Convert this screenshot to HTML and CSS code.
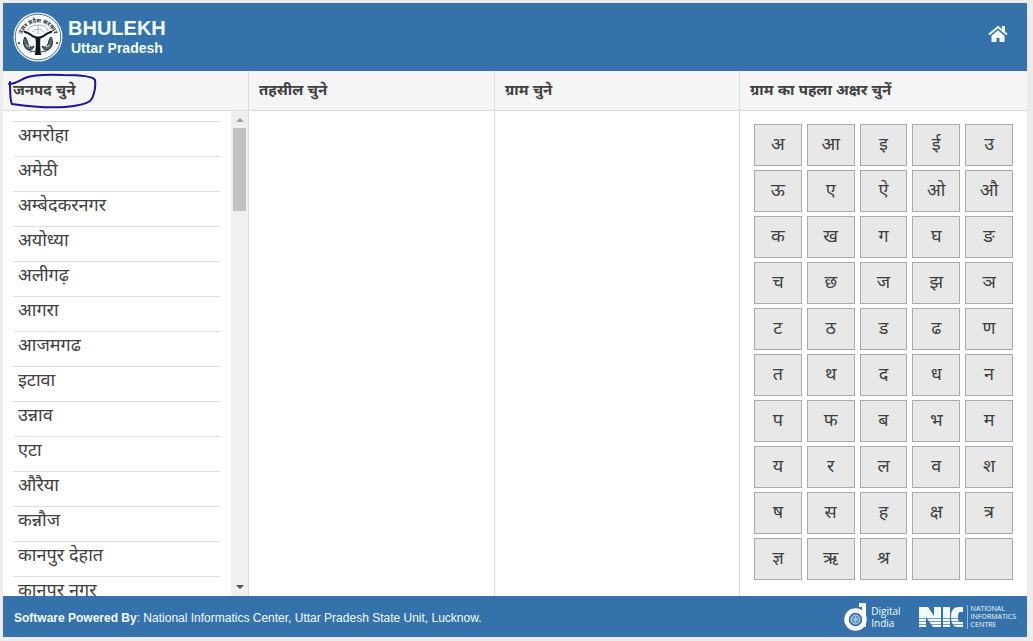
FILE: index.html
```html
<!DOCTYPE html>
<html lang="hi">
<head>
<meta charset="utf-8">
<meta name="viewport" content="width=device-width, initial-scale=1">
<title>BHULEKH Uttar Pradesh</title>
<link rel="stylesheet" href="styles.css">
</head>
<body>
<div class="page">
<header class="header">
  <div class="brand">
    <svg class="emblem" viewBox="0 0 50 50" aria-hidden="true">
      <defs><path id="arc" d="M8.5 27A16.5 16.5 0 0 1 41.5 27"/></defs>
      <circle cx="25" cy="25" r="24.5" fill="#e6f6fb"/>
      <circle cx="25" cy="25" r="22.8" fill="#fbfefe" stroke="#5f7480" stroke-width="1"/>
      <text class="emblem-text"><textPath href="#arc" startOffset="50%" text-anchor="middle">उत्तर प्रदेश सरकार</textPath></text>
      <path d="M15 19q1-6 10-6t10 6M25 13v9M19 20q6-6 12 0" fill="none" stroke="#a3afb3" stroke-width="1"/>
      <path d="M10 18.500c4 .5 6 2 9 4 2 1.500 4 2 6 2s4-.5 6-2c3-2 5-3.500 9-4l-1.500 2.500c-5 1-6 4-11 5.500-.8 5 0 10 .5 16.500h-6c.5-6.500 1.300-11.500.5-16.500-5-1.500-6-4.500-11-5.500z" fill="#10181b"/>
      <path d="M12 25c-3 5-1 11 3 13 3 1 5-1 6-4-2 2-5 1-6-2s-1-5-3-7zM38 25c3 5 1 11-3 13-3 1-5-1-6-4 2 2 5 1 6-2s1-5 3-7z" fill="#56656a" stroke="#1c282c" stroke-width="1"/>
      <path d="M15 27l3 3M35 27l-3 3M13 33l4 2M37 33l-4 2" stroke="#dce5e8" stroke-width="1"/>
      <path d="M17 40q3-2 5 0M28 40q3-2 5 0" fill="none" stroke="#2c393d" stroke-width="1"/>
      <circle cx="6" cy="31" r="1" fill="#222"/><circle cx="44" cy="31" r="1" fill="#222"/>
    </svg>
    <div>
      <h1 class="title">BHULEKH</h1>
      <p class="subtitle">Uttar Pradesh</p>
    </div>
  </div>
  <a class="home" href="#" aria-label="Home">
    <svg viewBox="0 0 20 18" aria-hidden="true"><path d="M1 9.500L10 2l9 7.500" fill="none" stroke="#f4feff" stroke-width="2"/><path d="M14 1h3v7l-3-2zM3.500 10.800L10 5.300l6.500 5.500V17h-5v-4h-3v4h-5z" fill="#f4feff"/></svg>
  </a>
</header>
<main class="columns">
  <section class="column">
    <h2 class="head"><span class="marked">जनपद चुने<svg class="ring" viewBox="0 0 90 36" aria-hidden="true"><path d="M2 9C2 19 2 28 4 31c14 2 38 4 53 3 12-1 21-3 25-6 4-4 6-14 5-21-2-4-18-5-32-5C31 1 22 3 17 5 11 8 7 11 1 11" fill="none" stroke="#1b129f" stroke-width="2" stroke-linecap="round"/></svg></span></h2>
    <div class="scroller">
      <ul class="districts">
        <li><a href="#">अमरोहा</a></li>
        <li><a href="#">अमेठी</a></li>
        <li><a href="#">अम्बेदकरनगर</a></li>
        <li><a href="#">अयोध्या</a></li>
        <li><a href="#">अलीगढ़</a></li>
        <li><a href="#">आगरा</a></li>
        <li><a href="#">आजमगढ</a></li>
        <li><a href="#">इटावा</a></li>
        <li><a href="#">उन्नाव</a></li>
        <li><a href="#">एटा</a></li>
        <li><a href="#">औरैया</a></li>
        <li><a href="#">कन्नौज</a></li>
        <li><a href="#">कानपुर देहात</a></li>
        <li><a href="#">कानपुर नगर</a></li>
      </ul>
      <div class="scrollbar" aria-hidden="true">
        <svg class="arrow" viewBox="0 0 17 17"><path d="M5 11l4-4 4 4z" fill="#a0a0a0"/></svg>
        <div class="thumb"></div>
        <svg class="arrow" viewBox="0 0 17 17"><path d="M5 6l4 4 4-4z" fill="#505050"/></svg>
      </div>
    </div>
  </section>
  <section class="column"><h2 class="head">तहसील चुने</h2></section>
  <section class="column"><h2 class="head">ग्राम चुने</h2></section>
  <section class="column letters">
    <h2 class="head">ग्राम का पहला अक्षर चुनें</h2>
    <div class="keys">
      <button>अ</button><button>आ</button><button>इ</button><button>ई</button><button>उ</button>
      <button>ऊ</button><button>ए</button><button>ऐ</button><button>ओ</button><button>औ</button>
      <button>क</button><button>ख</button><button>ग</button><button>घ</button><button>ङ</button>
      <button>च</button><button>छ</button><button>ज</button><button>झ</button><button>ञ</button>
      <button>ट</button><button>ठ</button><button>ड</button><button>ढ</button><button>ण</button>
      <button>त</button><button>थ</button><button>द</button><button>ध</button><button>न</button>
      <button>प</button><button>फ</button><button>ब</button><button>भ</button><button>म</button>
      <button>य</button><button>र</button><button>ल</button><button>व</button><button>श</button>
      <button>ष</button><button>स</button><button>ह</button><button>क्ष</button><button>त्र</button>
      <button>ज्ञ</button><button>ऋ</button><button>श्र</button><button></button><button></button>
    </div>
  </section>
</main>
<footer class="footer">
  <p class="credit"><b>Software Powered By</b>: National Informatics Center, Uttar Pradesh State Unit, Lucknow.</p>
  <div class="logos">
    <a class="digital" href="#">
      <svg class="d-logo" viewBox="0 0 24 28" aria-hidden="true"><circle cx="11.500" cy="16.500" r="9" fill="none" stroke="#fff" stroke-width="4.500"/><path d="M15 0h7v24h-4V4h-3z" fill="#fff"/><circle cx="11.500" cy="16.500" r="4.500" fill="#5b90c4" stroke="#c6dcf0" stroke-width="1"/><path d="M8 16.500h7M11.500 13v7M9 14l5 5M14 14l-5 5" stroke="#c6dcf0" stroke-width=".6"/></svg>
      <span>Digital<br>India</span>
    </a>
    <a class="nic" href="#">
      <svg class="nic-logo" viewBox="0 0 44 20" role="img" aria-label="NIC"><path d="M0 0h9l6 9V0h7v20h-8L7 10v10H0zM24 0h7v20h-7zM44 0v5h-3q-2 0-2 5t2 5h3v5h-5q-7 0-7-10t7-10z" fill="#f1fbff"/><path d="M0 11.500h44M0 14.500h44M0 17.500h44" stroke="#3572ab" stroke-width=".7"/></svg>
      <span class="nic-text">NATIONAL<br>INFORMATICS<br>CENTRE</span>
    </a>
  </div>
</footer>
</div>
</body>
</html>
```
FILE: styles.css
```css
* { box-sizing: border-box; }
body {
  margin: 0;
  background: #ececec;
  color: #404040;
  font-family: "Liberation Sans", "Noto Sans", "Noto Sans Devanagari", sans-serif;
}
h1, h2, p, ul { margin: 0; padding: 0; }
a { color: inherit; text-decoration: none; }
.page {
  display: flex;
  flex-direction: column;
  height: 100vh;
  padding: 3px 6px 4px 3px;
}
.header {
  display: flex;
  align-items: center;
  justify-content: space-between;
  height: 68px;
  flex: none;
  padding: 0 19px 0 10px;
  background: #3572ab;
  color: #f1fdff;
}
.brand { display: flex; align-items: center; gap: 5px; }
.emblem { width: 50px; height: 50px; }
.emblem-text { font-size: 6px; font-weight: bold; fill: #1c272b; }
.title { font-size: 20px; line-height: 22px; }
.subtitle { padding-left: 3px; font-size: 14px; line-height: 18px; font-weight: bold; }
.home svg { display: block; width: 20px; height: 18px; margin-bottom: 6px; }
.columns {
  display: grid;
  grid-template-columns: 246fr 246fr 245fr 287fr;
  flex: 1;
  min-height: 0;
  background: #fff;
}
.column {
  display: flex;
  flex-direction: column;
  min-width: 0;
  min-height: 0;
  border-right: 1px solid #ddd;
}
.column.letters { border-right: 0; }
.head {
  flex: none;
  height: 40px;
  padding: 0 10px;
  border-bottom: 1px solid #ddd;
  background: #f5f5f5;
  font-size: 15px;
  line-height: 38px;
  white-space: nowrap;
}
.marked { position: relative; display: inline-block; }
.ring { position: absolute; left: -5px; top: 2px; width: 90px; height: 36px; }
.scroller { display: flex; flex: 1; min-height: 0; overflow: hidden; }
.districts { flex: 1; padding: 10px 11px 0; list-style: none; }
.districts li {
  height: 35px;
  padding: 0 4px;
  border-top: 1px solid #ddd;
  font-size: 18px;
  line-height: 26px;
}
.scrollbar { display: flex; flex-direction: column; width: 17px; padding: 0 2px; background: #f0f0f0; }
.arrow { width: 17px; height: 17px; margin-left: -2px; flex: none; }
.thumb { height: 83px; margin-bottom: auto; background: #c1c1c1; }
.keys {
  display: grid;
  grid-template-columns: repeat(5, 1fr);
  grid-auto-rows: 42px;
  gap: 4px 5px;
  padding: 13px 14px;
}
button {
  padding: 0 0 3px;
  border: 1px solid #aaa;
  background: #e8e8e8;
  color: #404040;
  font: 18px/26px "Liberation Sans", "Noto Sans", "Noto Sans Devanagari", sans-serif;
}
.footer {
  display: flex;
  align-items: center;
  justify-content: space-between;
  flex: none;
  height: 41px;
  padding: 0 11px;
  background: #3572ab;
  color: #f1fdff;
}
.credit { padding-top: 2px; font-size: 12px; }
.logos, .digital, .nic { display: flex; align-items: center; }
.logos { gap: 18px; }
.digital { gap: 3px; font: 10px/12px "Open Sans", sans-serif; }
.d-logo { width: 24px; height: 28px; }
.nic { gap: 4px; }
.nic-logo { width: 44px; height: 20px; }
.nic-text { padding-left: 3px; border-left: 1px solid #8fb5d6; font: 7px/8px "Open Sans", sans-serif; }
```
